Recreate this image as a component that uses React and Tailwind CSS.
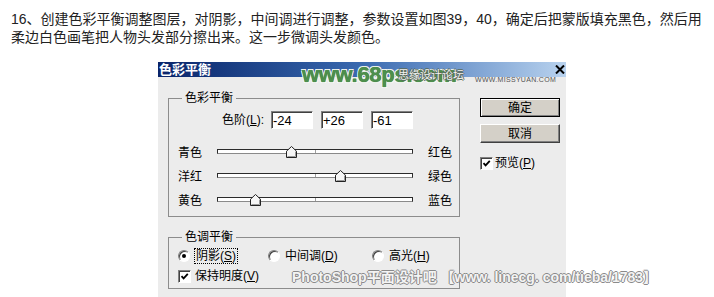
import React from "react";

const FONT = "[font-family:'Liberation_Sans','Noto_Sans_CJK_SC',sans-serif]";

const sliders = [
  { left: "青色", right: "红色", value: -24 },
  { left: "洋红", right: "绿色", value: 26 },
  { left: "黄色", right: "蓝色", value: -61 },
];

const TRACK = 196;

const Sunken = "border border-t-[#808080] border-l-[#808080] border-b-white border-r-white bg-white shadow-[inset_1px_1px_0_#404040]";

const CheckBox = () => (
  <span className={`flex h-[13px] w-[13px] shrink-0 items-center justify-center ${Sunken}`}>
    <svg width="9" height="9" viewBox="0 0 9 9">
      <path d="M1.5 4.2 L3.6 6.4 L7.8 1.8" fill="none" stroke="#000" strokeWidth="1.8" />
    </svg>
  </span>
);

const Radio = ({ on }) => (
  <span className={`flex h-3 w-3 shrink-0 items-center justify-center rounded-full ${Sunken}`}>
    {on && <span className="h-1 w-1 rounded-full bg-black" />}
  </span>
);

const Slider = ({ value }) => {
  const left = ((value + 100) / 200) * TRACK - 5.5;
  return (
    <div className="relative h-4 w-[196px]">
      <div className="relative mt-[4px] h-[5px] border border-[#2b2b2b] border-b-[#8a8a8a] bg-white">
        <div className="absolute left-[97px] top-0 h-full w-px bg-[#a0a0a0]" />
      </div>
      <svg className="absolute top-[1px]" style={{ left }} width="11" height="12" viewBox="0 0 11 12">
        <polygon points="0.5,11.5 0.5,5.2 5.5,0.5 10.5,5.2 10.5,11.5" fill="#f6f6f6" stroke="#222" />
        <path d="M9.5 5.6 V10.5 H1.5" fill="none" stroke="#9a9a9a" />
      </svg>
    </div>
  );
};

const Level = ({ value }) => (
  <input
    readOnly
    value={value}
    className={`h-[18px] w-[42px] pl-[1px] text-[13px] leading-[16px] text-black outline-none ${Sunken}`}
  />
);

export default function App() {
  return (
    <div className={`h-[297px] w-[714px] overflow-hidden bg-white ${FONT}`}>
      <div className="pl-[11px] pt-[10px] text-[14px] leading-[18px] text-[#222]">
        <div className="whitespace-nowrap">
          16、创建色彩平衡调整图层，对阴影，中间调进行调整，参数设置如图39，40，确定后把蒙版填充黑色，然后用
        </div>
        <div className="whitespace-nowrap">柔边白色画笔把人物头发部分擦出来。这一步微调头发颜色。</div>
      </div>

      <div className="relative ml-[158px] mt-[16px] w-[408px] bg-[#ececec] text-[12px] leading-4 text-black">
        {/* title bar */}
        <div className="flex h-[15px] items-center justify-between bg-linear-to-r from-[#0a246a] via-[#3a6ab0] to-[#b8d2ee] pr-[1px]">
          <span className="pl-[1px] text-[13px] font-bold leading-[15px] text-white">色彩平衡</span>
          <svg width="10" height="9" viewBox="0 0 10 9">
            <path d="M1 0.5 L9 8.5 M9 0.5 L1 8.5" stroke="#000" strokeWidth="2" />
          </svg>
        </div>

        <div className="flex pb-4">
          <div className="pl-[10px] pt-[14px]">
            <fieldset className="w-[292px] border border-[#8c8c8c] pb-[7px]">
              <legend className="ml-[13px] px-[3px] leading-[14px]">色彩平衡</legend>
              <div className="mt-[6px] flex items-center">
                <span className="w-[95px] text-right">
                  色阶(<span className="underline">L</span>):
                </span>
                <div className="ml-[7px] flex gap-2">
                  <Level value="-24" />
                  <Level value="+26" />
                  <Level value="-61" />
                </div>
              </div>
              <div className="mt-4 flex flex-col gap-2">
                {sliders.map((s) => (
                  <div key={s.left} className="flex h-4 items-center pl-[9px]">
                    <span className="w-[39px]">{s.left}</span>
                    <Slider value={s.value} />
                    <span className="ml-[15px]">{s.right}</span>
                  </div>
                ))}
              </div>
            </fieldset>

            <fieldset className="mt-[13px] w-[292px] border border-[#8c8c8c] pb-[4px]">
              <legend className="ml-[13px] px-[3px] leading-[14px]">色调平衡</legend>
              <div className="mt-[4px] flex h-4 items-center pl-[9px]">
                <div className="flex w-[90px] items-center">
                  <Radio on />
                  <span className="ml-[4px] border border-dotted border-black px-[1px] leading-[14px]">
                    阴影(<span className="underline">S</span>)
                  </span>
                </div>
                <div className="flex w-[104px] items-center">
                  <Radio />
                  <span className="ml-[5px]">
                    中间调(<span className="underline">D</span>)
                  </span>
                </div>
                <div className="flex items-center">
                  <Radio />
                  <span className="ml-[5px]">
                    高光(<span className="underline">H</span>)
                  </span>
                </div>
              </div>
              <div className="mt-[4px] flex h-4 items-center pl-[9px]">
                <CheckBox />
                <span className="ml-[4px]">
                  保持明度(<span className="underline">V</span>)
                </span>
              </div>
            </fieldset>
          </div>

          <div className="ml-[20px] flex w-[80px] flex-col pt-[21px]">
            <button className="h-[19px] w-[80px] border border-black bg-[#d4d0c8] leading-[16px] shadow-[inset_1px_1px_0_#fff,inset_-1px_-1px_0_#808080]">
              确定
            </button>
            <button className="mt-[7px] h-[19px] w-[80px] border border-t-white border-l-white border-r-[#404040] border-b-[#404040] bg-[#d4d0c8] leading-[16px] shadow-[inset_-1px_-1px_0_#808080]">
              取消
            </button>
            <div className="mt-[12px] flex h-4 items-center">
              <CheckBox />
              <span className="ml-[2px]">
                预览(<span className="underline">P</span>)
              </span>
            </div>
          </div>
        </div>

        {/* watermarks */}
        <span className="absolute left-[144px] top-[2px] text-[22px] font-bold leading-[22px] tracking-[-0.3px] text-[#4d8f4d] [text-shadow:0_0_1px_#1d5a1d,1px_1px_0_#fff,-1px_-1px_0_#fff,1px_-1px_0_#fff,-1px_1px_0_#fff]">
          www.68ps.com
        </span>
        <span className="absolute left-[240px] top-[7px] text-[11px] leading-[12px] text-[#f2f2f2] [text-shadow:1px_0_0_#5a6a5a,-1px_0_0_#5a6a5a,0_1px_0_#5a6a5a,0_-1px_0_#5a6a5a]">
          思缘设计论坛
        </span>
        <span className="absolute left-[317px] top-[14px] text-[7px] leading-[8px] tracking-[0.3px] text-[#555]">
          WWW.MISSYUAN.COM
        </span>
        <span className="absolute left-[134px] top-[207px] whitespace-nowrap text-[14px] font-bold leading-4 text-[#f4f4f4] [text-shadow:1px_0_0_#8a8a8a,-1px_0_0_#8a8a8a,0_1px_0_#8a8a8a,0_-1px_0_#8a8a8a]">
          PhotoShop平面设计吧 【www. linecg. com/tieba/1783】
        </span>
      </div>
    </div>
  );
}
